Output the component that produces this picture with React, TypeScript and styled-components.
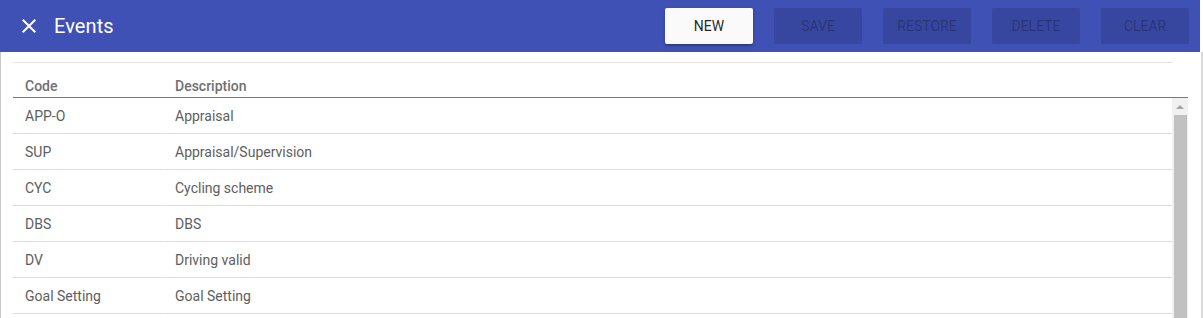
import * as React from 'react';
import styled, { createGlobalStyle } from 'styled-components';

const GlobalStyle = createGlobalStyle`
	html, body {
		margin: 0;
		padding: 0;
		background: #ffffff;
		overflow: hidden;
		font-family: Roboto, 'Liberation Sans', sans-serif;
	}
`;

const Page = styled.div`
	width: 1203px;
	height: 318px;
	display: flex;
	flex-direction: column;
	overflow: hidden;
`;

const AppBar = styled.header`
	width: 1200px;
	height: 52px;
	flex: none;
	display: flex;
	align-items: center;
	box-sizing: border-box;
	padding: 0 11px 0 17px;
	background: #3f51b5;
	color: #ffffff;
`;

const CloseButton = styled.button`
	width: 24px;
	height: 24px;
	padding: 0;
	border: 0;
	background: transparent;
	color: #ffffff;
	display: flex;
	svg {
		width: 24px;
		height: 24px;
	}
`;

const Title = styled.h1`
	margin: 0 0 0 13px;
	font-size: 20px;
	font-weight: 400;
	letter-spacing: 0.1px;
	flex: 1;
`;

const Actions = styled.div`
	display: flex;
	gap: 21px;
`;

const ActionButton = styled.button<{ $primary?: boolean }>`
	width: 88px;
	height: 36px;
	border: 0;
	border-radius: 2px;
	font-family: inherit;
	font-size: 14px;
	font-weight: 400;
	text-transform: uppercase;
	background: ${(p) => (p.$primary ? '#fafafa' : 'rgba(0, 0, 0, 0.12)')};
	color: ${(p) => (p.$primary ? 'rgba(0, 0, 0, 0.87)' : 'rgba(0, 0, 0, 0.26)')};
	box-shadow: ${(p) =>
		p.$primary ? '0 2px 2px rgba(0,0,0,0.2), 0 1px 4px rgba(0,0,0,0.12)' : 'none'};
`;

const Body = styled.div`
	flex: 1;
	min-height: 0;
	display: flex;
	flex-direction: column;
	box-sizing: border-box;
	width: 1203px;
	border-left: 1px solid #c9c9c9;
	border-right: 2px solid #dadada;
	padding: 10px 0 0 12px;
	overflow: hidden;
`;

const FilterLine = styled.div`
	flex: none;
	width: 1159px;
	height: 1px;
	background: #e3e3e3;
`;

const HeadRow = styled.div`
	flex: none;
	width: 1175px;
	height: 34px;
	display: flex;
	align-items: center;
	border-bottom: 1px solid #7a7a7a;
	font-size: 14px;
	font-weight: 500;
	color: #707070;
	padding-top: 12px;
	box-sizing: border-box;
	height: 35px;
`;

const Cell = styled.div<{ $code?: boolean }>`
	box-sizing: border-box;
	padding-left: 12px;
	${(p) => (p.$code ? 'width: 149px; margin-right: 1px;' : 'flex: 1;')}
`;

const Scroller = styled.div`
	flex: 1;
	display: flex;
	width: 1175px;
`;

const Rows = styled.div`
	flex: 1;
	display: flex;
	flex-direction: column;
`;

const Row = styled.div`
	flex: none;
	display: flex;
	height: 36px;
`;

const DataCell = styled(Cell)`
	box-sizing: border-box;
	height: 36px;
	display: flex;
	align-items: center;
	border-bottom: 1px solid #dcdcdc;
	font-size: 14px;
	color: #5e5e5e;
`;

const ScrollTrack = styled.div`
	width: 16px;
	flex: none;
	background: #f1f1f1;
	display: flex;
	flex-direction: column;
`;

const ScrollArrow = styled.div`
	height: 17px;
	width: 100%;
	display: flex;
	align-items: center;
	justify-content: center;
	&::before {
		content: '';
		border-left: 4px solid transparent;
		border-right: 4px solid transparent;
		border-bottom: 4px solid #a3a3a3;
	}
`;

const ScrollThumb = styled.div`
	width: 13px;
	margin-left: 2px;
	flex: 1;
	background: #c1c1c1;
`;

const events = [
	{ code: 'APP-O', description: 'Appraisal' },
	{ code: 'SUP', description: 'Appraisal/Supervision' },
	{ code: 'CYC', description: 'Cycling scheme' },
	{ code: 'DBS', description: 'DBS' },
	{ code: 'DV', description: 'Driving valid' },
	{ code: 'Goal Setting', description: 'Goal Setting' },
];

export default function App() {
	return (
		<Page>
			<GlobalStyle />
			<AppBar>
				<CloseButton aria-label='Close'>
					<svg viewBox='0 0 24 24' fill='currentColor'>
						<path d='M19 6.41L17.59 5 12 10.59 6.41 5 5 6.41 10.59 12 5 17.59 6.41 19 12 13.41 17.59 19 19 17.59 13.41 12z' />
					</svg>
				</CloseButton>
				<Title>Events</Title>
				<Actions>
					<ActionButton $primary>New</ActionButton>
					<ActionButton disabled>Save</ActionButton>
					<ActionButton disabled>Restore</ActionButton>
					<ActionButton disabled>Delete</ActionButton>
					<ActionButton disabled>Clear</ActionButton>
				</Actions>
			</AppBar>
			<Body>
				<FilterLine />
				<HeadRow>
					<Cell $code>Code</Cell>
					<Cell>Description</Cell>
				</HeadRow>
				<Scroller>
					<Rows>
						{events.map((e) => (
							<Row key={e.code}>
								<DataCell $code>{e.code}</DataCell>
								<DataCell>{e.description}</DataCell>
							</Row>
						))}
					</Rows>
					<ScrollTrack>
						<ScrollArrow />
						<ScrollThumb />
					</ScrollTrack>
				</Scroller>
			</Body>
		</Page>
	);
}
